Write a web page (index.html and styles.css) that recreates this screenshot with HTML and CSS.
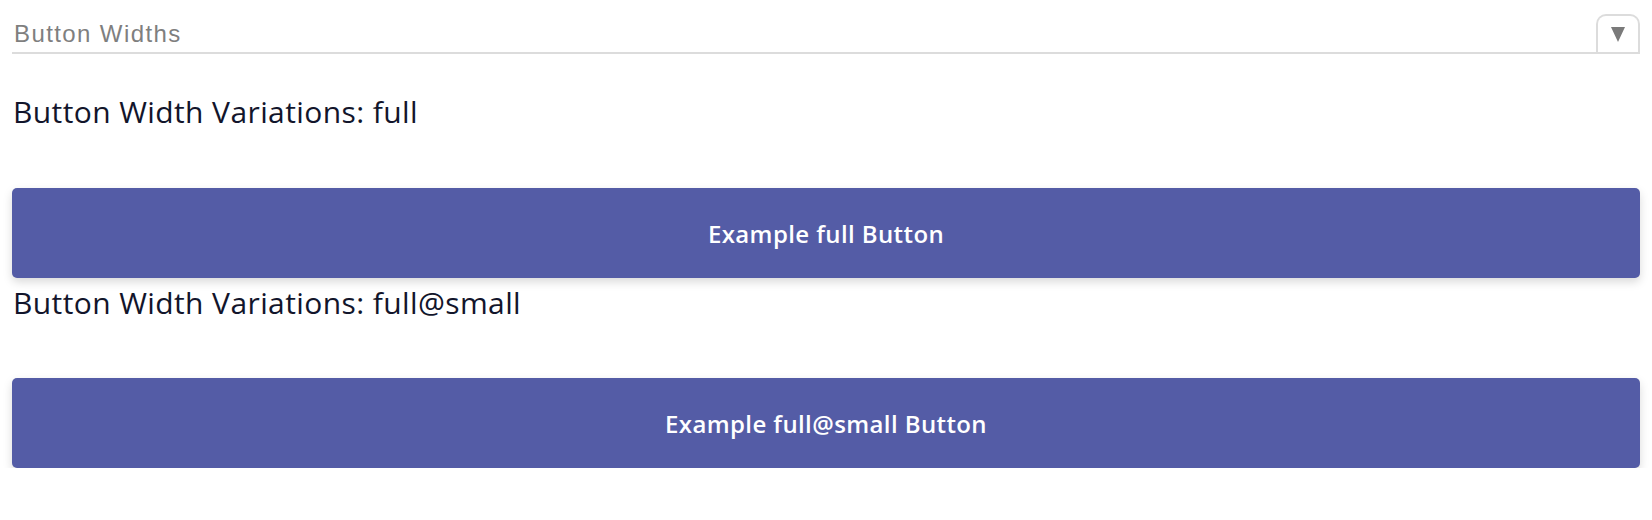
FILE: index.html
```html
<!DOCTYPE html>
<html>
<head>
<meta charset="utf-8">
<link rel="stylesheet" href="styles.css">
</head>
<body>
<div class="page">
  <div class="select">
    <span class="select-label">Button Widths</span>
    <span class="select-toggle"><span class="tri"></span></span>
  </div>
  <h2 class="heading first">Button Width Variations: full</h2>
  <button class="btn">Example full Button</button>
  <h2 class="heading">Button Width Variations: full@small</h2>
  <button class="btn">Example full@small Button</button>
</div>
</body>
</html>
```
FILE: styles.css
```css
html, body {
  margin: 0;
  padding: 0;
  background: #ffffff;
}
.page {
  padding: 14px 12px 0 12px;
  display: flex;
  flex-direction: column;
}
.select {
  display: flex;
  align-items: flex-end;
  justify-content: space-between;
  height: 38px;
  border-bottom: 2px solid #dcdcdc;
}
.select-label {
  font-family: "Liberation Sans", Arial, sans-serif;
  font-size: 24px;
  letter-spacing: 1.4px;
  color: #7f7f7f;
  padding: 0 0 4px 2px;
}
.select-toggle {
  width: 44px;
  height: 38px;
  border: 2px solid #dcdcdc;
  border-bottom: none;
  border-radius: 10px 10px 0 0;
  display: flex;
  justify-content: center;
  padding-top: 11px;
  box-sizing: border-box;
}
.tri {
  width: 0;
  height: 0;
  border-left: 7px solid transparent;
  border-right: 7px solid transparent;
  border-top: 15px solid #7a7a7a;
}
.heading {
  font-family: "Open Sans", sans-serif;
  font-weight: 400;
  font-size: 30px;
  letter-spacing: 0.4px;
  line-height: 41px;
  color: #12152b;
  margin: 4px 0 55px 1px;
}
.heading.first {
  margin-top: 37px;
  margin-bottom: 56px;
}
.btn {
  display: block;
  width: 100%;
  height: 90px;
  border: none;
  border-radius: 5px;
  background: #545ca6;
  color: #ffffff;
  font-family: "Open Sans", sans-serif;
  font-weight: 600;
  font-size: 24px;
  letter-spacing: 0.4px;
  box-shadow: 0 4px 10px rgba(0, 0, 0, 0.15);
  cursor: pointer;
}
```
